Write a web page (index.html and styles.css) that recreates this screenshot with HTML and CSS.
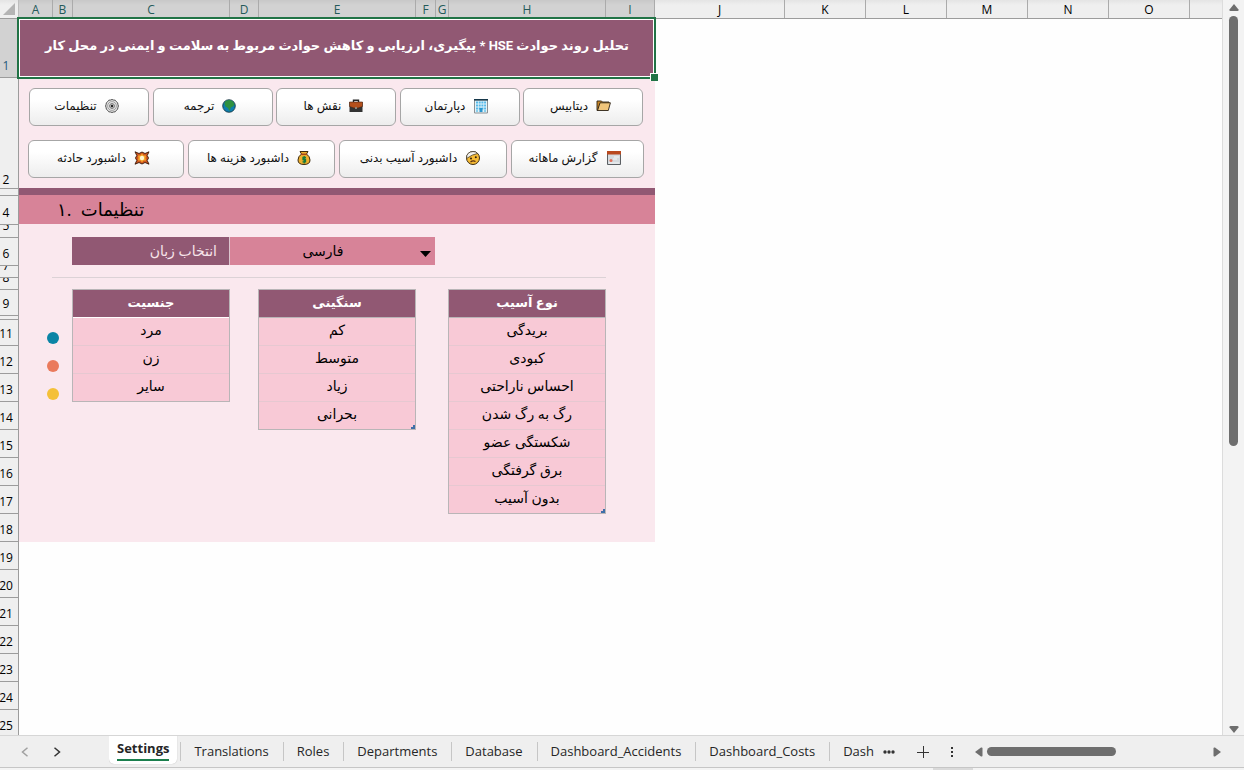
FILE: index.html
```html
<!DOCTYPE html>
<html lang="fa">
  <head>
    <meta charset="UTF-8">
    <title>HSE - Settings</title>
    <link rel="stylesheet" href="styles.css">
  </head>

  <body>
    <div class="window">
      <div class="sheet">
        <div class="col-heads">
          <div class="corner"><svg width="12" height="12" viewBox="0 0 12 12"><path d="M12 0v12H0z" fill="#b4b4b4"/></svg></div>
          <div class="col col-a selected">A</div>
          <div class="col col-b selected">B</div>
          <div class="col col-wide selected">C</div>
          <div class="col col-d selected">D</div>
          <div class="col col-wide selected">E</div>
          <div class="col col-b selected">F</div>
          <div class="col col-g selected">G</div>
          <div class="col col-wide selected">H</div>
          <div class="col col-i selected">I</div>
          <div class="col col-j">J</div>
          <div class="col">K</div>
          <div class="col">L</div>
          <div class="col">M</div>
          <div class="col">N</div>
          <div class="col">O</div>
          <div class="col col-rest"></div>
        </div>

        <div class="sheet-body">
          <div class="row-heads">
            <div class="row row-1 selected"><span>1</span></div>
            <div class="row row-2"><span>2</span></div>
            <div class="row row-3"></div>
            <div class="row row-4"><span>4</span></div>
            <div class="row row-5"><span>5</span></div>
            <div class="row"><span>6</span></div>
            <div class="row row-7"><span>7</span></div>
            <div class="row row-7"><span>8</span></div>
            <div class="row row-9"><span>9</span></div>
            <div class="row row-10"></div>
            <div class="row row-9"><span>11</span></div>
            <div class="row"><span>12</span></div>
            <div class="row"><span>13</span></div>
            <div class="row"><span>14</span></div>
            <div class="row"><span>15</span></div>
            <div class="row"><span>16</span></div>
            <div class="row"><span>17</span></div>
            <div class="row"><span>18</span></div>
            <div class="row"><span>19</span></div>
            <div class="row"><span>20</span></div>
            <div class="row"><span>21</span></div>
            <div class="row"><span>22</span></div>
            <div class="row"><span>23</span></div>
            <div class="row"><span>24</span></div>
            <div class="row"><span>25</span></div>
          </div>

          <main class="panel">
            <h1 class="title" dir="rtl">تحلیل روند حوادث HSE * پیگیری، ارزیابی و کاهش حوادث مربوط به سلامت و ایمنی در محل کار</h1>

            <nav class="nav" dir="rtl">
              <div class="nav-row nav-row-narrow">
                <button type="button" class="btn">
                  <svg width="15" height="13" viewBox="0 0 15 13"><path d="M1 2h4.500l1 1H13v2H4L2 11.500H1z" fill="#c98524" stroke="#2b2115" stroke-width=".9"/><path d="M4 3.800h10.400L12.300 11.500H1.500z" fill="#f0c57a" stroke="#2b2115" stroke-width=".9"/></svg>
                  دیتابیس
                </button>
                <button type="button" class="btn">
                  <svg width="16" height="16" viewBox="0 0 16 16"><path d="M1.500 2h13v13h-13z" fill="#e4f2f8" stroke="#8a9296"/><path d="M1 1h14v1.500H1z" fill="#16384a"/><path d="M3 4.500h10M3 7.500h10M3 10.500h10" stroke="#55baea" stroke-width="2" stroke-dasharray="2 .7"/><path d="M6.500 10h3v4h-3z" fill="#2a96cf"/><path d="M3 12h2v2H3zM11 12h2v2h-2z" fill="#8ad0ec"/></svg>
                  دپارتمان
                </button>
                <button type="button" class="btn">
                  <svg width="14" height="14" viewBox="0 0 14 14"><path d="M4.500 3V1.300h5V3" fill="none" stroke="#252525" stroke-width="1.400"/><path d="M.500 3h13v10H.500z" fill="#333"/><path d="M.500 3h13v4.500L9 9H5L.500 7.500z" fill="#b5501c" stroke="#4a2410" stroke-width=".6"/><path d="M6 8h2v2H6z" fill="#8b8378"/></svg>
                  نقش ها
                </button>
                <button type="button" class="btn">
                  <svg width="14" height="14" viewBox="0 0 14 14"><circle cx="7" cy="7" r="6.300" fill="#0e7fae" stroke="#17303a" stroke-width=".8"/><path d="M3 2.500Q5 .8 8 1l3 1.500 1.500 3-1.500 2-2 .8L7.500 12 6 9 3.500 7.500 2.500 5z" fill="#2f9140"/></svg>
                  ترجمه
                </button>
                <button type="button" class="btn">
                  <svg width="14" height="14" viewBox="0 0 14 14"><path d="M5.500 1l1.500-.5 1.500.5 1.700.2 1 1.300 1.400 1.200.3 1.600.5 1.700-.5 1.700-.3 1.600-1.400 1.200-1 1.300-1.700.2-1.500.5-1.500-.5-1.700-.2-1-1.300-1.400-1.200-.3-1.600L.6 7l.5-1.700.3-1.600 1.400-1.200 1-1.300z" fill="#dedede" stroke="#444" stroke-width=".9"/><circle cx="7" cy="7" r="4.300" fill="#f0f0f0" stroke="#8a8a8a" stroke-width=".8"/><circle cx="7" cy="7" r="2.500" fill="#c6c6c6" stroke="#666" stroke-width=".8"/><circle cx="7" cy="7" r="1.200" fill="#222"/></svg>
                  تنظیمات
                </button>
              </div>
              <div class="nav-row">
                <button type="button" class="btn btn-report">
                  <svg width="16" height="16" viewBox="0 0 16 16"><path d="M1.500 1.500h13v13h-13z" fill="#d5dade" stroke="#5b5f63"/><path d="M1 1h14v3.500H1z" fill="#b9491f"/><path d="M8 7h5M7 9h4M3 13h10" stroke="#f4f6f7"/><circle cx="5" cy="10.500" r="1.500" fill="#e2705a"/></svg>
                  گزارش ماهانه
                </button>
                <button type="button" class="btn btn-injury">
                  <svg width="16" height="16" viewBox="0 0 16 16"><circle cx="8" cy="8" r="6.500" fill="#f6bb34" stroke="#3b2b12"/><path d="M1.500 8Q1.500 2 8 1.500q3 0 4.500 2Q8 4 1.500 8.500z" fill="#f3f1ec" stroke="#4a4234" stroke-width=".8"/><circle cx="6" cy="8.500" r="1" fill="#2c1d0c"/><circle cx="10.800" cy="7.200" r="1" fill="#2c1d0c"/><path d="M5.500 12Q8 9.800 10.500 11.500" fill="none" stroke="#5a2f10" stroke-width="1.200"/></svg>
                  داشبورد آسیب بدنی
                </button>
                <button type="button" class="btn btn-costs">
                  <svg width="14" height="16" viewBox="0 0 14 16"><path d="M4.500 4L3 1.500h8L9.500 4q3.500 2.500 3.500 6 0 4.500-6 4.500T1 10Q1 6.500 4.500 4z" fill="#efb02d" stroke="#3c2a10"/><path d="M4 4.300h6" stroke="#a5481c" stroke-width="1.500"/><path d="M9 7.500H6v2h2.500v2.300H5.500M7.200 6v7.500" fill="none" stroke="#157a3c" stroke-width="1.300"/></svg>
                  داشبورد هزینه ها
                </button>
                <button type="button" class="btn btn-accident">
                  <svg width="16" height="14" viewBox="0 0 16 14"><path d="M1 .8L5 2.500 8 1l3 1.500L15 .8 13.200 4.500 14.500 7l-1.300 2.500L15 13.200 11 11.500 8 13l-3-1.500L1 13.200 2.800 9.500 1.500 7l1.300-2.500z" fill="#d0561d" stroke="#35170a" stroke-width=".9"/><path d="M8 2.500l1.500 2 2.500 0-.5 2.500.5 2.500H9.500L8 11.500l-1.500-2H4L4.500 7 4 4.500h2.500z" fill="#f7a829"/><circle cx="8" cy="7" r="2.200" fill="#fff6cf"/></svg>
                  داشبورد حادثه
                </button>
              </div>
            </nav>

            <h2 class="section-title" dir="ltr">۱. &nbsp;تنظیمات</h2>

            <form class="language">
              <label class="language-label" for="language" dir="rtl">انتخاب زبان</label>
              <div class="language-box">
                <select id="language" class="language-select" name="language">
                  <option>فارسی</option>
                  <option>English</option>
                </select>
                <svg class="language-arrow" width="11" height="6" viewBox="0 0 11 6"><path d="M0 0h11L5.500 6z" fill="#000"/></svg>
              </div>
            </form>

            <hr class="divider">

            <div class="lists">
              <div class="dots">
                <i class="dot dot-male"></i>
                <i class="dot dot-female"></i>
                <i class="dot dot-other"></i>
              </div>
              <table class="list list-gender">
                <thead><tr><th>جنسیت</th></tr></thead>
                <tbody>
                  <tr><td>مرد</td></tr>
                  <tr><td>زن</td></tr>
                  <tr><td>سایر</td></tr>
                </tbody>
              </table>
              <div class="list-wrap">
                <table class="list">
                  <thead><tr><th>سنگینی</th></tr></thead>
                  <tbody>
                    <tr><td>کم</td></tr>
                    <tr><td>متوسط</td></tr>
                    <tr><td>زیاد</td></tr>
                    <tr><td>بحرانی</td></tr>
                  </tbody>
                </table>
                <svg class="grip" width="4" height="4" viewBox="0 0 4 4"><path d="M2 0h2v4H0V2h2z" fill="#3f6fa8"/></svg>
              </div>
              <div class="list-wrap list-injury">
                <table class="list">
                  <thead><tr><th>نوع آسیب</th></tr></thead>
                  <tbody>
                    <tr><td>بریدگی</td></tr>
                    <tr><td>کبودی</td></tr>
                    <tr><td>احساس ناراحتی</td></tr>
                    <tr><td>رگ به رگ شدن</td></tr>
                    <tr><td>شکستگی عضو</td></tr>
                    <tr><td>برق گرفتگی</td></tr>
                    <tr><td>بدون آسیب</td></tr>
                  </tbody>
                </table>
                <svg class="grip" width="4" height="4" viewBox="0 0 4 4"><path d="M2 0h2v4H0V2h2z" fill="#3f6fa8"/></svg>
              </div>
            </div>
          </main>
        </div>
      </div>

      <div class="vscroll">
        <svg width="10" height="7" viewBox="0 0 10 7"><path d="M5 0l4.500 5.500q.5 1.500-1 1.500h-7Q0 7 .5 5.500z" fill="#6e6e6e"/></svg>
        <div class="vtrack"><div class="vthumb"></div></div>
        <svg width="10" height="7" viewBox="0 0 10 7"><path d="M5 7l4.500-5.500Q10 0 8.500 0h-7Q0 0 .5 1.500z" fill="#6e6e6e"/></svg>
      </div>
    </div>

    <footer class="tabbar">
      <div class="tabbar-main">
        <div class="arrows">
          <button type="button" class="icon-btn" aria-label="Previous sheet"><svg width="8" height="10" viewBox="0 0 8 10"><path d="M6.500.8L1.500 5l5 4.200" fill="none" stroke="#a0a0a0" stroke-width="1.500"/></svg></button>
          <button type="button" class="icon-btn" aria-label="Next sheet"><svg width="8" height="10" viewBox="0 0 8 10"><path d="M1.500.8L6.500 5l-5 4.200" fill="none" stroke="#333" stroke-width="1.500"/></svg></button>
        </div>
        <div class="tabs">
          <button type="button" class="tab active"><span>Settings</span></button>
          <button type="button" class="tab">Translations</button>
          <button type="button" class="tab">Roles</button>
          <button type="button" class="tab">Departments</button>
          <button type="button" class="tab">Database</button>
          <button type="button" class="tab">Dashboard_Accidents</button>
          <button type="button" class="tab">Dashboard_Costs</button>
          <button type="button" class="tab tab-cut">Dash</button>
        </div>
        <div class="tools">
          <button type="button" class="icon-btn" aria-label="More sheets"><svg width="12" height="4" viewBox="0 0 12 4"><g fill="#333"><circle cx="2" cy="2" r="1.700"/><circle cx="6" cy="2" r="1.700"/><circle cx="10" cy="2" r="1.700"/></g></svg></button>
          <button type="button" class="icon-btn" aria-label="New sheet"><svg width="12" height="12" viewBox="0 0 12 12"><path d="M6.500 0v12M0 6.500h12" stroke="#333"/></svg></button>
          <svg width="2" height="10" viewBox="0 0 2 10"><path d="M0 0h2v2H0zM0 4h2v2H0zM0 8h2v2H0z" fill="#333"/></svg>
        </div>
        <div class="hscroll">
          <svg width="8" height="10" viewBox="0 0 8 10"><path d="M0 5L6 .6Q7.500 0 7.500 1.500v7Q7.500 10 6 9.400z" fill="#6e6e6e"/></svg>
          <div class="htrack"><div class="hthumb"></div></div>
          <svg width="8" height="10" viewBox="0 0 8 10"><path d="M8 5L2 .6Q.5 0 .5 1.500v7Q.5 10 2 9.400z" fill="#6e6e6e"/></svg>
        </div>
      </div>
      <div class="tabbar-edge"></div>
    </footer>
  </body>
</html>
```
FILE: styles.css
```css
* {
  box-sizing: border-box;
}

body {
  margin: 0;
  height: 100vh;
  display: flex;
  flex-direction: column;
  overflow: hidden;
  background-color: #efefef;
  color: #000;
  font-family: "Open Sans", "DejaVu Sans", sans-serif;
}

button,
select {
  font-family: inherit;
  cursor: pointer;
}

svg {
  display: block;
  flex: none;
}

.window {
  flex: 1;
  min-height: 0;
  display: flex;
}

.sheet {
  flex: 1;
  min-width: 0;
  display: flex;
  flex-direction: column;
  overflow: hidden;
  background-color: #fefefe;
  border-right: 1px solid #dcdcdc;
}

/* column and row headings */

.col-heads {
  flex: none;
  display: flex;
  height: 19px;
  background: linear-gradient(#e4e4e4, #efefef 5px);
  border-bottom: 1px solid #9c9c9c;
}

.corner {
  flex: none;
  width: 19px;
  padding: 3px 0 0 3px;
  border-right: 1px solid #bdbdbd;
}

.col {
  flex: none;
  width: 81px;
  padding-top: 1px;
  border-right: 1px solid #ababab;
  font-size: 12px;
  line-height: 17px;
  text-align: center;
}

.col.selected {
  background: linear-gradient(#c8c8c8, #d2d2d2 5px);
  color: #245a5a;
}

.col-a { width: 34px; }
.col-b { width: 20px; }
.col-wide { width: 157px; }
.col-d { width: 29px; }
.col-g { width: 13px; }
.col-i { width: 49px; }
.col-j { width: 130px; }

.col-rest {
  flex: 1;
  border-right: 0;
}

.sheet-body {
  flex: 1;
  min-height: 0;
  display: flex;
  align-items: flex-start;
}

.row-heads {
  flex: none;
  width: 19px;
  background-color: #efefef;
  border-right: 1px solid #9c9c9c;
}

.row {
  display: flex;
  align-items: flex-end;
  height: 28px;
  overflow: hidden;
  border-bottom: 1px solid #9c9c9c;
}

.row span {
  width: 12px;
  display: flex;
  justify-content: center;
  font-size: 12px;
  line-height: 22px;
}

.row.selected {
  background-color: #d2d2d2;
  color: #245a7a;
}

.row-1 { height: 59px; }
.row-2 { height: 111px; }
.row-3 { height: 7px; }
.row-4 { height: 29px; }
.row-5 { height: 13px; }
.row-7 { height: 12px; }
.row-9 { height: 26px; }
.row-10 { height: 4px; }

.row-2 span {
  line-height: 17px;
}

/* worksheet content */

.panel {
  flex: none;
  width: 636px;
  padding-bottom: 28px;
  background-color: #fae8ee;
}

.title {
  position: relative;
  margin: 0;
  padding: 12px 0 16px;
  background-color: #915873;
  color: #fff;
  font-family: Roboto, "DejaVu Sans", sans-serif;
  font-size: 13px;
  line-height: 30px;
  font-weight: bold;
  text-align: center;
}

/* selected cell frame and its fill handle */
.title::before {
  content: "";
  position: absolute;
  inset: -2px -1px -2px -2px;
  border: 2px solid #217346;
  box-shadow: inset 0 0 0 1px #fff;
}

.title::after {
  content: "";
  position: absolute;
  right: -3px;
  bottom: -4px;
  width: 7px;
  height: 7px;
  border: solid #fff;
  border-width: 1px 0 0 1px;
  background-color: #217346;
}

.nav {
  display: flex;
  flex-direction: column;
  gap: 14px;
  padding: 11px 11px 10px 9px;
  border-bottom: 7px solid #915873;
}

.nav-row {
  display: flex;
  justify-content: space-between;
}

.nav-row-narrow {
  padding: 0 1px;
}

.btn {
  display: flex;
  align-items: center;
  justify-content: center;
  gap: 8px;
  width: 120px;
  height: 38px;
  padding: 0 5px 3px 0;
  border: 1px solid #a6a6a6;
  border-radius: 6px;
  background: linear-gradient(#fff 30%, #ededed);
  color: #111;
  font-size: 12px;
}

.btn-report { width: 133px; }
.btn-injury { width: 168px; }
.btn-costs { width: 147px; }
.btn-accident { width: 156px; }

.section-title {
  margin: 0;
  padding-left: 38px;
  background-color: #d78398;
  font-size: 18px;
  line-height: 29px;
  font-weight: normal;
}

.language {
  display: flex;
  margin: 13px 0 12px 53px;
}

.language-label {
  width: 157px;
  padding-right: 12px;
  background-color: #915873;
  color: #f7e4ea;
  font-size: 14px;
  line-height: 28px;
}

.language-box {
  position: relative;
  width: 206px;
  border-left: 1px solid #dcc6cf;
}

.language-select {
  display: block;
  width: 100%;
  height: 28px;
  padding: 0 19px 1px 0;
  border: 0;
  border-radius: 0;
  background-color: #d78398;
  color: #000;
  appearance: none;
  font-size: 14px;
  text-align: center;
  text-align-last: center;
}

.language-arrow {
  position: absolute;
  right: 4px;
  top: 14px;
  pointer-events: none;
}

.divider {
  height: 1px;
  margin: 0 49px 11px 33px;
  border: 0;
  background-color: #dcd2d6;
}

.lists {
  display: flex;
  align-items: flex-start;
  padding-left: 28px;
}

.dots {
  display: flex;
  flex-direction: column;
  gap: 16px;
  padding-top: 43px;
  margin-right: 13px;
}

.dot {
  width: 12px;
  height: 12px;
  border-radius: 50%;
}

.dot-male { background-color: #0a84a5; }
.dot-female { background-color: #ea7a5c; }
.dot-other { background-color: #f4c038; }

.list {
  width: 158px;
  border: 1px solid #b9b5b7;
  border-bottom: 0;
  border-spacing: 0;
  background-color: #f8c9d6;
  font-size: 14px;
  text-align: center;
}

.list th,
.list td {
  height: 28px;
  padding: 0 0 3px;
  line-height: 20px;
  border-bottom: 1px solid #e6c8d1;
}

.list td {
  direction: rtl;
}

.list th {
  background-color: #915873;
  color: #fff;
  font-size: 13px;
  border-bottom-color: #b9b5b7;
}

.list-gender th {
  border-bottom-color: #fff;
}

.list tbody tr:last-child td {
  border-bottom-color: #b9b5b7;
}

.list-wrap {
  position: relative;
  margin-left: 28px;
}

.list-injury {
  margin-left: 32px;
}

.grip {
  position: absolute;
  right: 1px;
  bottom: 1px;
}

/* scroll bars and sheet tabs */

.vscroll {
  flex: none;
  width: 21px;
  display: flex;
  flex-direction: column;
  align-items: center;
  gap: 5px;
  padding: 4px 0 2px;
  background-color: #f3f3f3;
}

.vtrack {
  flex: 1;
}

.vthumb {
  width: 9px;
  height: 61%;
  border-radius: 5px;
  background-color: #6e6e6e;
}

.tabbar {
  flex: none;
  background-color: #efefef;
  border-top: 1px solid #d6d6d6;
}

.tabbar-main {
  display: flex;
  height: 31px;
}

.arrows {
  flex: none;
  display: flex;
  gap: 24px;
  width: 109px;
  padding-left: 21px;
}

.icon-btn {
  display: flex;
  align-items: center;
  padding: 0;
  border: 0;
  background: none;
}

.tabs {
  display: flex;
  min-width: 0;
  overflow: hidden;
}

.tab {
  position: relative;
  flex: none;
  padding: 0 14px;
  border: 0;
  background: none;
  color: #262626;
  font-size: 13px;
  line-height: 31px;
}

.tab + .tab::before {
  content: "";
  position: absolute;
  left: 0;
  top: 6px;
  height: 19px;
  border-left: 1px solid #c6c6c6;
}

.tab.active {
  height: 28px;
  margin-right: 3px;
  padding: 0 8px 2px;
  border-radius: 0 0 5px 5px;
  background-color: #fff;
  box-shadow: 0 0 1px #aaa;
  font-weight: bold;
  line-height: 22px;
}

.tab.active span {
  display: block;
  border-bottom: 2px solid #1b7f4d;
}

.tab-cut {
  padding-right: 9px;
}

.tools {
  flex: none;
  display: flex;
  align-items: center;
  gap: 22px;
}

.hscroll {
  flex: none;
  display: flex;
  align-items: center;
  gap: 4px;
  width: 246px;
  margin-left: auto;
  margin-right: 23px;
}

.htrack {
  flex: 1;
}

.hthumb {
  width: 58%;
  height: 9px;
  border-radius: 5px;
  background-color: #6e6e6e;
}

.tabbar-edge {
  height: 3px;
  border-top: 1px solid #c6c6c6;
  background: linear-gradient(#dadada, #dadada) 933px 0 / 40px 2px no-repeat #f4f4f4;
}
```
